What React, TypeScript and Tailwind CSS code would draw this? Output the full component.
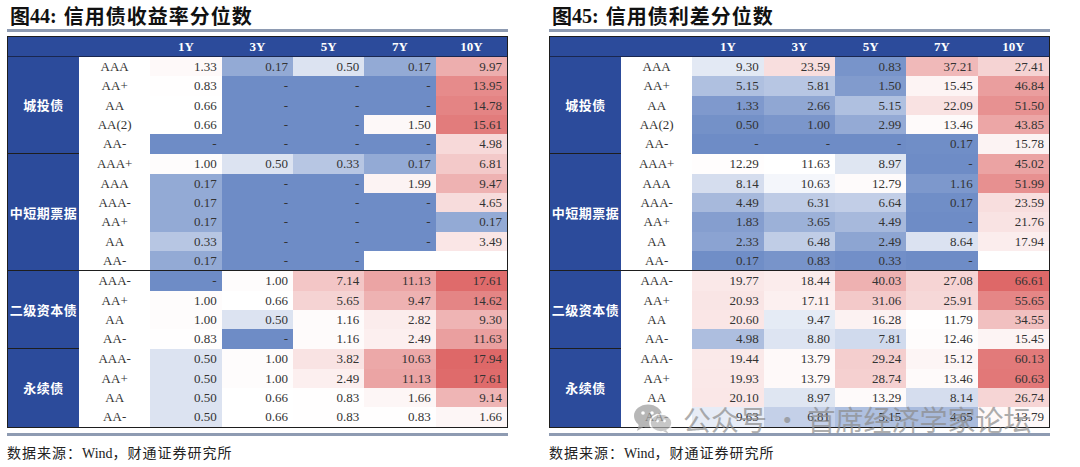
import React from 'react'

type Row = { rating: string; values: string[] }
type Group = { name: string; rows: Row[] }

const yieldGroups: Group[] = [
  {
    name: '城投债',
    rows: [
      { rating: 'AAA', values: ['1.33', '0.17', '0.50', '0.17', '9.97'] },
      { rating: 'AA+', values: ['0.83', '-', '-', '-', '13.95'] },
      { rating: 'AA', values: ['0.66', '-', '-', '-', '14.78'] },
      { rating: 'AA(2)', values: ['0.66', '-', '-', '1.50', '15.61'] },
      { rating: 'AA-', values: ['-', '-', '-', '-', '4.98'] },
    ],
  },
  {
    name: '中短期票据',
    rows: [
      { rating: 'AAA+', values: ['1.00', '0.50', '0.33', '0.17', '6.81'] },
      { rating: 'AAA', values: ['0.17', '-', '-', '1.99', '9.47'] },
      { rating: 'AAA-', values: ['0.17', '-', '-', '-', '4.65'] },
      { rating: 'AA+', values: ['0.17', '-', '-', '-', '0.17'] },
      { rating: 'AA', values: ['0.33', '-', '-', '-', '3.49'] },
      { rating: 'AA-', values: ['0.17', '-', '-', '', ''] },
    ],
  },
  {
    name: '二级资本债',
    rows: [
      { rating: 'AAA-', values: ['-', '1.00', '7.14', '11.13', '17.61'] },
      { rating: 'AA+', values: ['1.00', '0.66', '5.65', '9.47', '14.62'] },
      { rating: 'AA', values: ['1.00', '0.50', '1.16', '2.82', '9.30'] },
      { rating: 'AA-', values: ['0.83', '-', '1.16', '2.49', '11.63'] },
    ],
  },
  {
    name: '永续债',
    rows: [
      { rating: 'AAA-', values: ['0.50', '1.00', '3.82', '10.63', '17.94'] },
      { rating: 'AA+', values: ['0.50', '1.00', '2.49', '11.13', '17.61'] },
      { rating: 'AA', values: ['0.50', '0.66', '0.83', '1.66', '9.14'] },
      { rating: 'AA-', values: ['0.50', '0.66', '0.83', '0.83', '1.66'] },
    ],
  },
]

const spreadGroups: Group[] = [
  {
    name: '城投债',
    rows: [
      { rating: 'AAA', values: ['9.30', '23.59', '0.83', '37.21', '27.41'] },
      { rating: 'AA+', values: ['5.15', '5.81', '1.50', '15.45', '46.84'] },
      { rating: 'AA', values: ['1.33', '2.66', '5.15', '22.09', '51.50'] },
      { rating: 'AA(2)', values: ['0.50', '1.00', '2.99', '13.46', '43.85'] },
      { rating: 'AA-', values: ['-', '-', '-', '0.17', '15.78'] },
    ],
  },
  {
    name: '中短期票据',
    rows: [
      { rating: 'AAA+', values: ['12.29', '11.63', '8.97', '-', '45.02'] },
      { rating: 'AAA', values: ['8.14', '10.63', '12.79', '1.16', '51.99'] },
      { rating: 'AAA-', values: ['4.49', '6.31', '6.64', '0.17', '23.59'] },
      { rating: 'AA+', values: ['1.83', '3.65', '4.49', '-', '21.76'] },
      { rating: 'AA', values: ['2.33', '6.48', '2.49', '8.64', '17.94'] },
      { rating: 'AA-', values: ['0.17', '0.83', '0.33', '-', ''] },
    ],
  },
  {
    name: '二级资本债',
    rows: [
      { rating: 'AAA-', values: ['19.77', '18.44', '40.03', '27.08', '66.61'] },
      { rating: 'AA+', values: ['20.93', '17.11', '31.06', '25.91', '55.65'] },
      { rating: 'AA', values: ['20.60', '9.47', '16.28', '11.79', '34.55'] },
      { rating: 'AA-', values: ['4.98', '8.80', '7.81', '12.46', '15.45'] },
    ],
  },
  {
    name: '永续债',
    rows: [
      { rating: 'AAA-', values: ['19.44', '13.79', '29.24', '15.12', '60.13'] },
      { rating: 'AA+', values: ['19.93', '13.79', '28.74', '13.46', '60.63'] },
      { rating: 'AA', values: ['20.10', '8.97', '13.29', '8.14', '26.74'] },
      { rating: 'AA-', values: ['9.63', '6.81', '5.15', '4.65', '13.79'] },
    ],
  },
]

const terms = ['1Y', '3Y', '5Y', '7Y', '10Y']

// 3-colour scale: blue (min) -> white (mid) -> red (max)
function cellBg(v: string, mid: number, max: number) {
  if (v === '') return '#ffffff'
  const n = v === '-' ? 0 : parseFloat(v)
  const blue = [110, 140, 198]
  const red = [222, 104, 104]
  let t: number
  let c: number[]
  if (n <= mid) {
    t = (mid - n) / mid
    c = blue
  } else {
    t = Math.min(1, (n - mid) / (max - mid))
    c = red
  }
  const mix = c.map((x) => Math.round(255 + (x - 255) * t))
  return `rgb(${mix[0]}, ${mix[1]}, ${mix[2]})`
}

function HeatTable({ groups, mid, max }: { groups: Group[]; mid: number; max: number }) {
  return (
    <div className="w-[501px] border border-[#1e1e1e] font-['Liberation_Serif',serif] text-[13px] text-[#333]">
      <div className="flex h-[20px] bg-[#2c4b9b] border-b border-[#1a2750] text-white font-bold">
        <div className="w-[71px]" />
        <div className="grid flex-1 grid-cols-6">
          <div />
          {terms.map((t) => (
            <div key={t} className="flex items-center justify-center">
              {t}
            </div>
          ))}
        </div>
      </div>
      {groups.map((g, gi) => (
        <div key={g.name} className={gi > 0 ? 'flex border-t border-[#1e1e1e]' : 'flex'}>
          <div className="flex w-[71px] items-center justify-center bg-[#2c4b9b] font-['Noto_Sans_CJK_SC',sans-serif] text-[13px] font-bold tracking-[0.5px] text-white">
            {g.name}
          </div>
          <div className="flex-1">
            {g.rows.map((r) => (
              <div key={r.rating} className="grid h-[19.3px] grid-cols-6">
                <div className="flex items-center justify-center bg-white">{r.rating}</div>
                {r.values.map((v, i) => (
                  <div
                    key={i}
                    className="flex items-center justify-end pr-[5px]"
                    style={{ backgroundColor: cellBg(v, mid, max) }}
                  >
                    {v}
                  </div>
                ))}
              </div>
            ))}
          </div>
        </div>
      ))}
    </div>
  )
}

function Panel({ num, title, groups, mid, max }: { num: string; title: string; groups: Group[]; mid: number; max: number }) {
  return (
    <div className="flex w-[501px] flex-col">
      <div className="flex h-[29px] items-center pl-[3px] pt-[3px] text-[20px] font-bold text-[#111]">
        <span className="font-['Noto_Sans_CJK_SC',sans-serif]">图</span>
        <span className="font-['Liberation_Serif',serif]">{num}:</span>
        <span className="ml-[7px] font-['Noto_Sans_CJK_SC',sans-serif] tracking-[1px]">{title}</span>
      </div>
      <div className="h-[3px] bg-[#8e9bb2]" />
      <div className="mt-[4px]">
        <HeatTable groups={groups} mid={mid} max={max} />
      </div>
      <div className="mt-[5.5px] h-[2.5px] bg-[#8e9bb2]" />
      <div className="mt-[8px] text-[14px] leading-[16px] tracking-[1px] text-[#222] font-['Noto_Sans_CJK_SC',sans-serif]">
        数据来源：<span className="font-['Liberation_Serif',serif] tracking-normal">Wind</span>，财通证券研究所
      </div>
    </div>
  )
}

function WeChatMark() {
  return (
    <svg width="40" height="32" viewBox="0 0 40 32" fill="none">
      <ellipse cx="15" cy="13" rx="14" ry="11.5" fill="#9a9a9a" />
      <path d="M6 21 L4 28 L12 23 Z" fill="#9a9a9a" />
      <circle cx="10" cy="10" r="1.8" fill="#fff" />
      <circle cx="19" cy="10" r="1.8" fill="#fff" />
      <ellipse cx="28" cy="20" rx="11" ry="9" fill="#b0b0b0" stroke="#fff" strokeWidth="1.5" />
      <path d="M33 27 L36 31 L30 28 Z" fill="#b0b0b0" />
      <circle cx="24.5" cy="18" r="1.4" fill="#fff" />
      <circle cx="31.5" cy="18" r="1.4" fill="#fff" />
    </svg>
  )
}

export default function App() {
  return (
    <div className="relative h-[467px] w-[1080px] overflow-hidden bg-white">
      <div className="flex gap-[41px] pl-[7px]">
        <Panel num="44" title="信用债收益率分位数" groups={yieldGroups} mid={0.66} max={17.94} />
        <Panel num="45" title="信用债利差分位数" groups={spreadGroups} mid={11.5} max={66.61} />
      </div>
      {/* watermark over the right table */}
      <div className="pointer-events-none absolute left-[633px] top-[402px] flex items-center gap-[10px] opacity-70">
        <WeChatMark />
        <span className="font-['Noto_Sans_CJK_SC',sans-serif] text-[28px] leading-[34px] text-[#8c8c8c]">
          公众号 · 首席经济学家论坛
        </span>
      </div>
    </div>
  )
}
